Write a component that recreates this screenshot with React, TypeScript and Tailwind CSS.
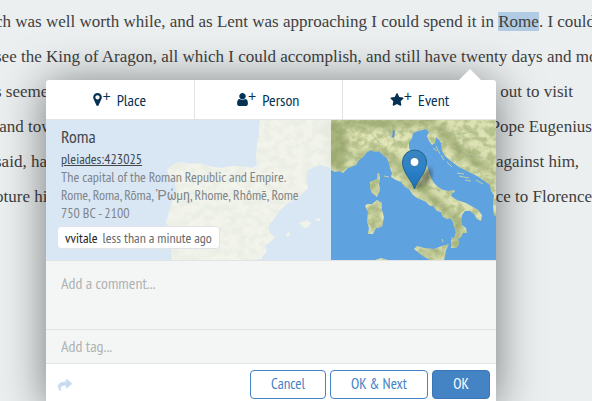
import React from "react";
import { FaStar, FaShare } from "react-icons/fa";

const narrow = "font-['PT_Sans_Narrow','Liberation_Sans_Narrow','Roboto_Condensed','Open_Sans_Condensed','Liberation_Sans',sans-serif]";

const LAND =
  "M285 50L289 52L293 51L297 53L302 48L310 45L313 40L317 37L321 32L325 30L329 32L333 31L337 35L341 38L343 43L344 48L346 53L345 57L350 60L355 62L359 67L363 69L367 75L371 78L376 80L380 82L384 86L387 86L391 91L395 92L397 97L401 99L404 98L407 102L408 106L410 112L408 118L405 120L405 128L410 128L413 124L412 119L415 117L417 113L421 113L420 108L416 105L415 101L416 95L419 91L424 91L428 94L431 99L435 101L436 95L432 90L427 87L420 83L411 80L405 76L406 73L409 72L408 70L403 71L397 70L392 67L388 63L385 58L383 52L381 45L376 40L370 38L366 33L363 28L363 22L366 18L367 13L372 11L380 9L383 12L381 16L383 21L386 25L389 23L390 17L393 20L395 23L396 31L399 36L406 42L413 47L423 52L431 56L437 60L444 65L445 71L448 75L447 86L448 95L450 96V0H285Z M333 53L334 58L333 64L334 70L331 77L326 73L324 68L324 62L331 59L331 54Z M331 80L336 83L336 90L338 97L336 107L330 108L327 114L322 114L323 108L321 102L322 92L319 86L321 84L326 84Z M368 129L371 126L378 128L388 129L396 126L403 124L400 130L399 136L398 140H384L377 136Z M329 140L335 138L342 140Z";

const IBERIA =
  "M214 0L213 8L213 16L211 25L210 38L211 45L206 48L195 46L184 46L176 48L167 47L160 45L154 43L144 44L134 42L126 45L121 50L123 56L129 63L130 70L126 83L123 92L120 103L123 108L128 111L127 123L125 131L126 140H206L215 139L221 131L219 126L227 120L229 117L224 113L222 106L228 99L234 90L241 84L252 78L262 68L260 58L262 50L268 47L274 45L285 48V0Z M253 103L258 101L261 100L265 103L262 107L258 108Z M240 115L243 112L244 115L241 117Z M269 99L273 98L275 101L271 101Z";

function MapBackdrop() {
  return (
    <svg
      aria-hidden="true"
      viewBox="0 0 450 140"
      preserveAspectRatio="xMaxYMid slice"
      className="absolute inset-0 size-full"
    >
      <defs>
        <clipPath id="land">
          <path d={LAND} />
          <path d={IBERIA} />
        </clipPath>
        <filter id="relief" x="0" y="0" width="100%" height="100%" colorInterpolationFilters="sRGB">
          <feTurbulence type="fractalNoise" baseFrequency="0.12 0.14" numOctaves="5" seed="8" />
          <feColorMatrix values="0 0 0 0 .56  0 0 0 0 .63  0 0 0 0 .4  3.6 0 0 0 -1.4" />
        </filter>
        <filter id="soft">
          <feGaussianBlur stdDeviation="3" />
        </filter>
        <filter id="shade">
          <feGaussianBlur stdDeviation="2" />
        </filter>
        <linearGradient id="pin" x1="0" y1="0" x2="0" y2="1">
          <stop offset="0" stopColor="#3a86bd" />
          <stop offset=".45" stopColor="#2e82c9" />
          <stop offset="1" stopColor="#1d6fb8" />
        </linearGradient>
      </defs>
      <rect width="450" height="140" fill="#5fa2e0" />
      <g clipPath="url(#land)">
        <rect width="450" height="140" fill="#dde2b4" />
        <g filter="url(#soft)" fill="none" stroke="#a7b37c" strokeLinecap="round">
          <path d="M285 8L293 22L290 40" strokeWidth="20" />
          <path d="M300 4H345L385 0" strokeWidth="8" />
          <path d="M312 34L335 30L352 43L365 62L380 73L398 88L412 104L411 124" strokeWidth="7" />
          <path d="M395 8L410 28L440 48" strokeWidth="9" />
          <path d="M328 60V72M329 86V108M375 133H398" strokeWidth="5" />
        </g>
        <path
          d="M308 18L326 13L350 16L366 18L362 30L345 29L326 26L312 31Z"
          fill="#e3e6b8"
          filter="url(#soft)"
        />
        <rect width="450" height="140" filter="url(#relief)" opacity=".5" />
        <path
          d="M285 5L298 10L308 4M318 8L326 14L334 24M341 6L346 18L357 25M390 6L405 15L428 12M405 27L422 36L438 38"
          fill="none"
          stroke="#9aac8b"
          strokeWidth="1"
          opacity=".5"
        />
      </g>
      <path d="M347 10L349 11L348 18L346 17Z" fill="#5b93cf" />
      <path
        d="M387 28L391 31M390 26L394 34M395 35L398 40M401 42L406 47M411 53L418 54M413 56L423 58M419 60L425 61M430 60L437 64M338 56L343 57M396 119L397 122M405 117l2 2"
        stroke="#bfd0a9"
        strokeWidth="1"
        fill="none"
      />
      <path d="M369 69L378 52Q384 44 386 52Q387 60 378 66Z" fill="#283128" opacity=".5" filter="url(#shade)" />
      <path
        d="M368.500 69C366 60 356.500 53 356.500 42A12 12 0 0 1 380.500 42C380.500 53 371 60 368.500 69Z"
        fill="url(#pin)"
        stroke="#22638f"
        strokeWidth="1"
      />
      <circle cx="368.500" cy="42" r="4.500" fill="#fff" stroke="#2d6d9e" strokeWidth="1" />
    </svg>
  );
}

function MarkerIcon() {
  return (
    <svg aria-hidden="true" viewBox="0 128 1024 1536" fill="currentColor" className="h-[13px] w-[9px]">
      <path d="M768 640q0-106-75-181t-181-75-181 75-75 181 75 181 181 75 181-75 75-181zm256 0q0 109-33 179l-364 774q-16 33-47.500 52t-67.500 19-67.500-19-46.500-52l-365-774q-33-70-33-179 0-212 150-362t362-150 362 150 150 362z" />
    </svg>
  );
}

function UserIcon() {
  return (
    <svg aria-hidden="true" viewBox="0 128 1280 1536" fill="currentColor" className="h-[13px] w-[11px]">
      <path d="M1280 1399q0 109-62.500 187t-150.500 78h-854q-88 0-150.500-78t-62.500-187q0-85 8.500-160.500t31.500-152 58.500-131 94-89 134.500-34.500q131 128 313 128t313-128q76 0 134.500 34.500t94 89 58.500 131 31.500 152 8.500 160.500zm-256-887q0 159-112.500 271.500t-271.500 112.500-271.500-112.500-112.500-271.500 112.500-271.500 271.500-112.500 271.500 112.500 112.500 271.500z" />
    </svg>
  );
}

function StarIcon() {
  return <FaStar aria-hidden="true" className="h-[13px] w-3.5" />;
}

const tabs = [
  { label: "Place", Icon: MarkerIcon },
  { label: "Person", Icon: UserIcon },
  { label: "Event", Icon: StarIcon },
];

function AnnotationPopup() {
  return (
    <section
      aria-label="Annotation"
      className={`absolute left-[46px] top-20 w-[450px] rounded-[3px] bg-white shadow-[0_3px_45px_rgba(0,0,0,0.5)] ${narrow}`}
    >
      <svg aria-hidden="true" viewBox="0 0 22 11" className="absolute right-[15px] -top-[11px] h-[11px] w-[22px]">
        <path d="M0 11L11 0L22 11Z" fill="#fff" />
      </svg>
      <nav className="flex h-10 border-b border-[#e2e4e4]">
        {tabs.map(({ label, Icon }) => (
          <button
            key={label}
            type="button"
            className="flex w-[33%] items-center justify-center border-r border-[#e2e4e4] text-base text-[#053253] last:grow last:border-r-0"
          >
            <Icon />
            <span className="-mt-2 mr-1.5 font-['Liberation_Sans',sans-serif] text-sm leading-4">+</span>
            <span>{label}</span>
          </button>
        ))}
      </nav>
      <div className="relative h-[140px] overflow-hidden">
        <MapBackdrop />
        <div className="relative h-full w-[285px] bg-[#f7f9fa]/80 pl-[15px] pt-[7px] text-sm leading-[18px] text-[#808488]">
          <h2 className="mb-[3px] text-lg leading-5 text-[#44484c]">Roma</h2>
          <a href="#pleiades" className="text-[#44484c] underline">pleiades:423025</a>
          <p>The capital of the Roman Republic and Empire.</p>
          <p className="whitespace-nowrap">Rome, Roma, Rōma, Ῥώμη, Rhome, Rhômē, Rome</p>
          <p>750 BC - 2100</p>
          <p className="-ml-1 mt-1 inline-flex h-[23px] items-center gap-[5px] rounded-sm border border-[#dfe3e6] bg-white px-[7px] text-[#666a6c]">
            <span className="text-[#222]">vvitale</span>
            <span>less than a minute ago</span>
          </p>
        </div>
      </div>
      <textarea
        aria-label="Comment"
        placeholder="Add a comment..."
        className="block h-[70px] w-full resize-none border-y border-[#e2e4e4] bg-[#f4f6f6] px-[15px] py-2.5 text-base text-[#444] outline-none placeholder:text-[#b0b2b2]"
      />
      <input
        aria-label="Tag"
        placeholder="Add tag..."
        className="block h-[34px] w-full border-b border-[#e2e4e4] bg-[#f4f6f6] px-[15px] pb-0.5 text-base text-[#444] outline-none placeholder:text-[#b0b2b2]"
      />
      <footer className="flex h-[41px] items-center gap-1 px-1.5 text-[15px]">
        <button type="button" aria-label="Reply" className="ml-1.5 mr-auto text-[#c8dbf0]">
          <FaShare className="size-3.5" />
        </button>
        <button type="button" className="h-[29px] w-[76px] rounded-sm border border-[#4483c4] text-[#4483c4]">
          Cancel
        </button>
        <button type="button" className="h-[29px] w-[98px] rounded-sm border border-[#4483c4] text-[#4483c4]">
          OK &amp; Next
        </button>
        <button type="button" className="h-[29px] w-[58px] rounded-sm border border-[#3a76b5] bg-[#4483c4] text-white">
          OK
        </button>
      </footer>
    </section>
  );
}

const splitLines = [
  ["s seemed", "\u00a0out to visit"],
  ["\u00a0and towns", "Pope Eugenius"],
  ["said, had", "against him,"],
  ["oture him", "ce to Florence"],
];

export default function App() {
  return (
    <main className="relative h-screen overflow-hidden bg-[#ebeff0]">
      <article className="-ml-[5px] whitespace-nowrap pt-1 font-['Liberation_Serif',serif] text-[17px] leading-[35px] text-[#404040]">
        <p>
          ch was well worth while, and as Lent was approaching I could spend it in{" "}
          <mark className="bg-[#b0cbe2] text-inherit">Rome</mark>. I could
        </p>
        <p>see the King of Aragon, all which I could accomplish, and still have twenty days and more</p>
        {splitLines.map(([start, end]) => (
          <p key={end} className="flex">
            <span className="w-[501px]">{start}</span>
            <span>{end}</span>
          </p>
        ))}
      </article>
      <AnnotationPopup />
    </main>
  );
}
